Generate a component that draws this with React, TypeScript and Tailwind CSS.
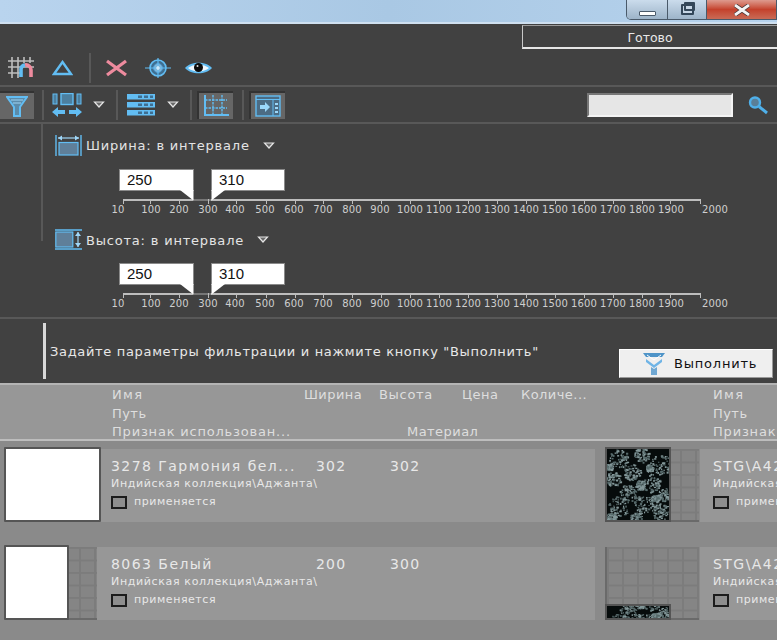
import React from 'react';

const TICKS = [
  { label: '10', x: 123, lx: 118 }, { label: '100', x: 150, lx: 151 }, { label: '200', x: 179, lx: 179 },
  { label: '300', x: 208, lx: 208 }, { label: '400', x: 236, lx: 235 }, { label: '500', x: 266, lx: 265 },
  { label: '600', x: 295, lx: 294 }, { label: '700', x: 323, lx: 323 }, { label: '800', x: 352, lx: 352 },
  { label: '900', x: 381, lx: 380 }, { label: '1000', x: 410, lx: 410 }, { label: '1100', x: 439, lx: 439 },
  { label: '1200', x: 468, lx: 468 }, { label: '1300', x: 497, lx: 497 }, { label: '1400', x: 526, lx: 526 },
  { label: '1500', x: 555, lx: 555 }, { label: '1600', x: 584, lx: 584 }, { label: '1700', x: 613, lx: 613 },
  { label: '1800', x: 642, lx: 642 }, { label: '1900', x: 670, lx: 671 }, { label: '2000', x: 700, lx: 715 },
];

const gridBg =
  'bg-[#858585] bg-[linear-gradient(#7c7c7c_2px,transparent_2px),linear-gradient(90deg,#7c7c7c_2px,transparent_2px)] bg-[length:15px_12.5px]';

// flower texture of the tile thumbnails
const Floral: React.FC<{ className?: string; viewBox?: string }> = ({ className, viewBox = '0 0 65 75' }) => {
  let seed = 17;
  const rnd = () => {
    seed = (seed * 16807) % 2147483647;
    return seed / 2147483647;
  };
  const flowers = [
    [12, 10, 10], [36, 6, 8], [56, 16, 11], [26, 24, 9], [6, 32, 8], [46, 36, 10], [22, 46, 9],
    [60, 48, 7], [12, 60, 11], [38, 58, 10], [56, 66, 9], [30, 72, 6], [4, 72, 5], [34, 38, 5],
    [44, 20, 4], [2, 18, 4], [50, 52, 4],
  ];
  const petals: React.ReactNode[] = [];
  flowers.forEach(([cx, cy, r], i) => {
    for (let k = 0; k < 70; k++) {
      const a = rnd() * Math.PI * 2;
      const d = Math.sqrt(rnd()) * r;
      petals.push(
        <rect
          key={`${i}-${k}`}
          x={cx + Math.cos(a) * d}
          y={cy + Math.sin(a) * d}
          width={1 + rnd() * 1.6}
          height={1 + rnd() * 1.2}
          fill={rnd() > 0.5 ? '#84989a' : '#56696a'}
        />
      );
    }
  });
  return (
    <svg viewBox={viewBox} preserveAspectRatio="none" className={className}>
      <rect x="0" y="0" width="65" height="75" fill="#070c0c" />
      {petals}
    </svg>
  );
};

const Caret = ({ className = '' }: { className?: string }) => (
  <svg width="12" height="7" viewBox="0 0 12 7" className={className}>
    <path d="M1.5 1h9L6 6z" fill="#6a6a6a" stroke="#e4e4e4" strokeWidth="1.2" />
  </svg>
);

const Divider = ({ className = '' }: { className?: string }) => <div className={`w-[2px] bg-[#585858] ${className}`} />;

const MeshIcon = () => (
  <svg width="28" height="22" viewBox="0 0 28 22" className="ml-[8px]">
    <path d="M0 4h26M0 10h26M0 16h14M4 0v21M10 0v21M16 0v6M22 0v6" stroke="#bdbdbd" strokeWidth="1.6" />
    <path d="M13 20v-8a4.5 4.5 0 0 1 4-4" fill="none" stroke="#62bdf3" strokeWidth="3.6" />
    <path d="M17 8a5 5 0 0 1 6 5v7" fill="none" stroke="#ee8b9e" strokeWidth="3.6" />
  </svg>
);

const TriangleIcon = () => (
  <svg width="21" height="16" viewBox="0 0 21 16" className="ml-[16px]">
    <path d="M10.5 2 19 14H2z" fill="none" stroke="#62bdf3" strokeWidth="2.4" />
  </svg>
);

const CrossIcon = () => (
  <svg width="23" height="18" viewBox="0 0 23 18" className="ml-[14px]">
    <path d="M2 2l19 14M21 2 2 16" stroke="#ee8b9e" strokeWidth="3.2" />
  </svg>
);

const TargetIcon = () => (
  <svg width="26" height="20" viewBox="0 0 26 20" className="ml-[17px]">
    <circle cx="13" cy="10" r="8" fill="#3f6e90" stroke="#62bdf3" strokeWidth="1.6" />
    <circle cx="13" cy="10" r="4.5" fill="#7fb6da" stroke="#4e9bd0" />
    <path d="M0 10h26M13 0v20" stroke="#62bdf3" strokeWidth="1.2" />
    <path d="M11 10h4M13 8v4" stroke="#e6f3fb" strokeWidth="1.2" />
  </svg>
);

const EyeIcon = () => (
  <svg width="27" height="14" viewBox="0 0 27 14" className="ml-[14px]">
    <path d="M0 7C6 0 21 0 27 7 21 14 6 14 0 7z" fill="#62bdf3" />
    <path d="M3 7c5-4.5 16-4.5 21 0-5 4.5-16 4.5-21 0z" fill="#f2f8fc" />
    <circle cx="13.5" cy="6.5" r="4.5" fill="#0c0c0c" />
    <circle cx="12.5" cy="5" r="1" fill="#ddd" />
  </svg>
);

const FilterIcon = () => (
  <svg width="22" height="22" viewBox="0 0 22 22">
    <path d="M1 2h20l-7 10v9H8v-9z" fill="#5b8cab" stroke="#62bdf3" strokeWidth="2" />
    <path d="M5 5h12M7 8h8" stroke="#9fd6f7" strokeWidth="1" />
  </svg>
);

const RunIcon = () => (
  <svg width="24" height="24" viewBox="0 0 24 24">
    <path d="M1 1h22l-3 4H4z" fill="#4f94c8" />
    <path d="M4 7l8 6 8-6v3l-8 6-8-6z" fill="#6fb4e6" />
    <path d="M5 3l7 5 7-5" fill="none" stroke="#fff" strokeWidth="1" />
    <path d="M9 15l3 2 3-2v8H9z" fill="#6fa7d2" />
  </svg>
);

const ArrowsIcon = () => (
  <svg width="30" height="24" viewBox="0 0 30 24" className="ml-[8px]">
    <rect x="1" y="1" width="4" height="10" fill="#4c7f9f" stroke="#62bdf3" />
    <rect x="9" y="0.5" width="12" height="11" fill="#4c7f9f" stroke="#62bdf3" strokeWidth="1.4" />
    <rect x="25" y="1" width="4" height="10" fill="#4c7f9f" stroke="#62bdf3" />
    <path d="M0 19l6-5v3h7v4H6v3zM30 19l-6-5v3h-7v4h7v3z" fill="#62bdf3" />
  </svg>
);

const RowsIcon = () => (
  <svg width="28" height="22" viewBox="0 0 28 22" className="ml-[9px]">
    {[0, 8, 16].map((y) => (
      <g key={y}>
        <rect x="0" y={y} width="28" height="5.5" fill="#62bdf3" />
        <rect x="11" y={y + 1.5} width="4" height="2.5" fill="#3f6e90" />
        <rect x="17" y={y + 1.5} width="4" height="2.5" fill="#3f6e90" />
        <rect x="23" y={y + 1.5} width="3" height="2.5" fill="#3f6e90" />
      </g>
    ))}
  </svg>
);

const GridBtnIcon = () => (
  <svg width="26" height="22" viewBox="0 0 26 22">
    <path d="M2 0v20h24" fill="none" stroke="#62bdf3" strokeWidth="2" />
    <path d="M2 5h22M2 13h22M10 0v20M19 0v20" fill="none" stroke="#62bdf3" strokeWidth="1.4" strokeDasharray="2.5 1" />
  </svg>
);

const PanelBtnIcon = () => (
  <svg width="26" height="22" viewBox="0 0 26 22">
    <rect x="1" y="1" width="24" height="20" fill="#4c6c84" stroke="#62bdf3" strokeWidth="1.4" />
    <path d="M1 4.5h24M18 5v16" stroke="#62bdf3" strokeWidth="1" />
    <path d="M5 10h5V7l5 5-5 5v-3H5z" fill="#9bd8fb" />
    <rect x="20" y="8" width="3" height="2" fill="#9bd8fb" />
    <rect x="20" y="12" width="3" height="2" fill="#9bd8fb" />
    <rect x="20" y="16" width="3" height="2" fill="#9bd8fb" />
  </svg>
);

const WidthIcon = () => (
  <svg width="27" height="21" viewBox="0 0 27 21" className="shrink-0">
    <path d="M1 0v21M26 0v21" stroke="#62bdf3" strokeWidth="1.4" />
    <path d="M3 3h21" stroke="#9fd6f7" strokeWidth="1.2" />
    <path d="M3 3l4-2.5v5zM24 3l-4-2.5v5z" fill="#9fd6f7" />
    <rect x="4" y="7.5" width="19" height="12.5" fill="#5f7f99" stroke="#62bdf3" strokeWidth="1.2" />
  </svg>
);

const HeightIcon = () => (
  <svg width="27" height="21" viewBox="0 0 27 21" className="shrink-0">
    <path d="M0 1h27M0 20h27" stroke="#62bdf3" strokeWidth="1.4" />
    <rect x="0.8" y="3" width="17" height="15" fill="#5f7f99" stroke="#62bdf3" strokeWidth="1.2" />
    <path d="M23 3v15" stroke="#9fd6f7" strokeWidth="1.2" />
    <path d="M23 3l-3 4h6zM23 18l-3-4h6z" fill="#9fd6f7" />
  </svg>
);

const RangeSlider = () => (
  <div className="relative h-[54px] font-['DejaVu_Sans',sans-serif]">
    <div className="absolute left-[123px] right-[77px] top-[30px] h-[2px] bg-[#bdbdbd]" />
    <div className="absolute left-[193px] w-[18px] top-[30px] h-[2px] bg-[#777]" />
    {TICKS.map((t) => (
      <React.Fragment key={t.label}>
        <div className="absolute top-[30px] w-[1px] h-[5px] bg-[#bdbdbd]" style={{ left: t.x }} />
        <span
          className="absolute top-[35px] -translate-x-1/2 text-[10px] leading-[12px] tracking-[0.15px] text-[#cfcfcf]"
          style={{ left: t.lx }}
        >
          {t.label}
        </span>
      </React.Fragment>
    ))}
    <div className="absolute left-[119px] top-0 w-[75px] h-[22px] bg-white border border-[#8a8a8a] pl-[7px] font-['Liberation_Sans',sans-serif] text-[15px] leading-[20px] text-[#111]">
      250
    </div>
    <svg width="14" height="11" viewBox="0 0 14 11" className="absolute left-[180px] top-[21px]">
      <path d="M0 0h13.5v10.5z" fill="#fff" />
    </svg>
    <div className="absolute left-[211px] top-0 w-[74px] h-[22px] bg-white border border-[#8a8a8a] pl-[7px] font-['Liberation_Sans',sans-serif] text-[15px] leading-[20px] text-[#111]">
      310
    </div>
    <svg width="14" height="11" viewBox="0 0 14 11" className="absolute left-[211px] top-[21px]">
      <path d="M0.5 0H14L0.5 10.5z" fill="#fff" />
    </svg>
  </div>
);

const HeaderCell = () => (
  <div className="w-[601px] shrink-0 pl-[112px] text-[13px] text-[#dedede] leading-[16px] tracking-[0.45px]">
    <div className="flex h-[20px] pt-[2px]">
      <span className="w-[192px] tracking-[1.4px]">Имя</span>
      <span className="w-[75px]">Ширина</span>
      <span className="w-[83px] tracking-[0.7px]">Высота</span>
      <span className="w-[59px]">Цена</span>
      <span>Количе...</span>
    </div>
    <div className="h-[19px] pt-[1px]">Путь</div>
    <div className="flex h-[17px]">
      <span className="w-[295px] tracking-[0.8px] whitespace-nowrap">Признак использован...</span>
      <span>Материал</span>
    </div>
  </div>
);

type TileProps = { name: string; w: string; h: string; thumb: React.ReactNode; panelLeft: number };

const Tile = ({ name, w, h, thumb, panelLeft }: TileProps) => (
  <div className="w-[601px] shrink-0 h-[75px] flex pl-[4px]">
    <div className="relative shrink-0 h-[75px]" style={{ width: panelLeft }}>
      {thumb}
    </div>
    <div className="w-[498px] shrink-0 mt-[2px] h-[73px] bg-[#979797] text-[#e8e8e8] pl-[14px]" style={{ marginLeft: 93 - panelLeft }}>
      <div className="flex pt-[9px] text-[14px] leading-[16px] tracking-[1.45px]">
        <span className="w-[205px] whitespace-nowrap overflow-hidden">{name}</span>
        <span className="w-[74px] tracking-[1.2px]">{w}</span>
        <span className="tracking-[1.2px]">{h}</span>
      </div>
      <div className="mt-[3px] text-[11px] leading-[14px] tracking-[0.65px] whitespace-nowrap">
        Индийская коллекция\Аджанта\
      </div>
      <div className="mt-[4px] flex items-center text-[11px] leading-[14px] tracking-[0.55px] whitespace-nowrap">
        <span className="w-[16px] h-[13px] border-2 border-[#1c1c1c] bg-[#8e8e8e] mr-[7px]" />
        применяется
      </div>
    </div>
  </div>
);

const WhiteThumb = ({ width }: { width: string }) => (
  <div className={`absolute left-0 top-0 h-[75px] bg-white border-2 border-[#555] rounded-[1px] ${width}`} />
);

const GridBack = ({ from }: { from: string }) => (
  <div className={`absolute top-[2px] h-[73px] ${from} ${gridBg} border-b-2 border-[#6a6a6a]`} />
);

const RightThumb1 = () => (
  <div className="relative w-[94px] h-[75px] shrink-0">
    <div className={`absolute left-[60px] right-0 top-[2px] h-[73px] ${gridBg} border-b-2 border-[#6a6a6a]`} />
    <div className="absolute left-0 top-0 w-[66px] h-[75px] border-2 border-[#555] overflow-hidden">
      <Floral className="w-full h-full block" />
    </div>
  </div>
);

const RightThumb2 = () => (
  <div className="relative w-[94px] h-[75px] shrink-0">
    <div className={`absolute left-0 right-0 top-[2px] h-[73px] ${gridBg} border-b-2 border-l-2 border-[#6a6a6a]`} />
    <div className="absolute left-0 bottom-0 w-[66px] h-[16px] border-2 border-[#555] overflow-hidden">
      <Floral className="w-full h-full block" viewBox="0 40 65 15" />
    </div>
  </div>
);

const RightTile = ({ thumb }: { thumb: React.ReactNode }) => (
  <div className="w-[176px] shrink-0 h-[75px] flex pl-[4px]">
    {thumb}
    <div className="ml-[1px] flex-1 mt-[2px] h-[73px] bg-[#979797] text-[#e8e8e8] pl-[13px] overflow-hidden whitespace-nowrap">
      <div className="pt-[9px] text-[14px] leading-[16px] tracking-[1.45px]">STG\A42</div>
      <div className="mt-[3px] text-[11px] leading-[14px] tracking-[0.65px]">Индийская коллекция</div>
      <div className="mt-[4px] flex items-center text-[11px] leading-[14px] tracking-[0.55px]">
        <span className="w-[16px] h-[13px] border-2 border-[#1c1c1c] bg-[#8e8e8e] mr-[7px] shrink-0" />
        применяется
      </div>
    </div>
  </div>
);

export default function App() {
  return (
    <div className="w-[777px] h-[640px] overflow-hidden bg-[#414141] font-['DejaVu_Sans',sans-serif]">
      {/* title bar */}
      <div className="h-[24px] flex justify-end items-start bg-gradient-to-r from-[#b9d4ee] via-[#a9c8e4] to-[#b7d3ed] border-b-2 border-[#cfe0f0]">
        <div className="w-[151px] h-[20px] flex border border-t-0 border-[#4a5a6a] rounded-bl-[5px] overflow-hidden">
          <div className="w-[41px] flex items-end justify-center pb-[3px] bg-gradient-to-b from-[#cbdcec] to-[#9db4c9] border-r border-[#4a5a6a]">
            <div className="w-[17px] h-[5px] bg-white border border-[#4a5a6a] rounded-[1px]" />
          </div>
          <div className="w-[39px] flex items-center justify-center bg-gradient-to-b from-[#cbdcec] to-[#9db4c9] border-r border-[#4a5a6a]">
            <div className="relative w-[13px] h-[11px] border-2 border-[#33475a] rounded-[1px] bg-[#c6d6e6]">
              <div className="absolute -top-[4px] left-[1px] w-[11px] h-[9px] border-2 border-[#33475a] rounded-[1px]" />
            </div>
          </div>
          <div className="flex-1 flex items-center justify-center bg-gradient-to-b from-[#dd9a8e] via-[#c4412c] to-[#c96a55]">
            <svg width="18" height="12" viewBox="0 0 18 12">
              <path d="M2 1l14 10M16 1 2 11" stroke="#4a3a3a" strokeWidth="4.4" />
              <path d="M2 1l14 10M16 1 2 11" stroke="#f4f4f4" strokeWidth="2.8" />
            </svg>
          </div>
        </div>
      </div>

      {/* top toolbar */}
      <div className="h-[63px] border-b-2 border-[#585858] relative">
        <div className="flex justify-end pt-[1px]">
          <div className="w-[255px] h-[24px] border-l border-t border-b-2 border-l-[#c8c8c8] border-t-[#9a9a9a] border-b-[#e6e6e6] text-center text-[12.5px] leading-[24px] text-[#e8e8e8]">
            Готово
          </div>
        </div>
        <div className="flex items-center h-[36px] pt-[2px]">
          <MeshIcon />
          <TriangleIcon />
          <Divider className="ml-[16px] h-[30px]" />
          <CrossIcon />
          <TargetIcon />
          <EyeIcon />
        </div>
      </div>

      {/* second toolbar */}
      <div className="h-[37px] border-b-2 border-[#585858] flex items-center">
        <div className="w-[34px] h-[28px] bg-[#666] border-t-2 border-[#333] flex items-center justify-center">
          <FilterIcon />
        </div>
        <Divider className="ml-[8px] h-[30px]" />
        <ArrowsIcon />
        <Caret className="ml-[11px]" />
        <Divider className="ml-[11px] h-[30px]" />
        <RowsIcon />
        <Caret className="ml-[12px]" />
        <Divider className="ml-[11px] h-[30px]" />
        <div className="ml-[5px] w-[36px] h-[28px] bg-[#666] border-t-2 border-l-2 border-[#333] flex items-center justify-center">
          <GridBtnIcon />
        </div>
        <Divider className="ml-[9px] h-[30px]" />
        <div className="ml-[5px] w-[36px] h-[28px] bg-[#666] border-t-2 border-l-2 border-[#333] flex items-center justify-center">
          <PanelBtnIcon />
        </div>
        <div className="ml-[302px] w-[146px] h-[24px] bg-[#e6e6e6] border-2 border-t-[#777] border-l-[#777] border-b-[#f4f4f4] border-r-[#f4f4f4]" />
        <svg width="22" height="20" viewBox="0 0 22 20" className="ml-[14px]">
          <circle cx="8" cy="7.5" r="5" fill="#5a7f98" stroke="#4fb0ea" strokeWidth="2.4" />
          <path d="M12 11.5l8 6.5" stroke="#4fb0ea" strokeWidth="3" />
        </svg>
      </div>

      {/* filter sliders */}
      <div className="relative h-[195px] pt-[11px] border-b-2 border-[#585858]">
        <div className="absolute left-[41px] top-0 w-[2px] h-[117px] bg-[#585858]" />
        <div className="flex items-center h-[21px] ml-[55px] text-[13px] text-[#e4e4e4]">
          <WidthIcon />
          <span className="ml-[4px] pt-[1px] whitespace-nowrap tracking-[0.8px]">Ширина: в интервале</span>
          <Caret className="ml-[13px]" />
        </div>
        <div className="mt-[13px]">
          <RangeSlider />
        </div>
        <div className="flex items-center h-[21px] mt-[6px] ml-[55px] text-[13px] text-[#e4e4e4]">
          <HeightIcon />
          <span className="ml-[4px] pt-[2px] whitespace-nowrap tracking-[0.8px]">Высота: в интервале</span>
          <Caret className="ml-[13px]" />
        </div>
        <div className="mt-[13px]">
          <RangeSlider />
        </div>
      </div>

      {/* hint and run button */}
      <div className="h-[64px] flex pl-[43px] pt-[4px] relative">
        <div className="w-[3px] h-[56px] bg-[#d8d8d8]" />
        <span className="ml-[4px] mt-[21px] text-[13px] leading-[16px] text-[#e8e8e8] tracking-[0.67px] whitespace-nowrap">
          Задайте параметры фильтрации и нажмите кнопку "Выполнить"
        </span>
        <button className="absolute right-[4px] top-[30px] w-[154px] h-[29px] bg-[#efefef] border border-[#fff] border-b-[#999] border-r-[#999] flex items-center text-[13px] tracking-[0.8px] text-[#111]">
          <span className="ml-[22px] mr-[8px] flex">
            <RunIcon />
          </span>
          Выполнить
        </button>
      </div>

      {/* tile list */}
      <div className="h-[257px] bg-[#8a8a8a] overflow-hidden">
        <div className="h-[58px] bg-[#979797] border-t-2 border-b-2 border-t-[#b4b4b4] border-b-[#bdbdbd] flex overflow-hidden">
          <HeaderCell />
          <div className="w-[176px] shrink-0 overflow-hidden">
            <div className="w-[601px] pl-[112px] text-[13px] text-[#dedede] leading-[16px] tracking-[0.45px]">
              <div className="h-[20px] pt-[2px] tracking-[1.4px]">Имя</div>
              <div className="h-[19px] pt-[1px]">Путь</div>
              <div className="h-[17px] tracking-[0.8px] whitespace-nowrap">Признак использован...</div>
            </div>
          </div>
        </div>
        <div className="flex mt-[6px]">
          <Tile name="3278 Гармония бел..." w="302" h="302" panelLeft={97} thumb={<WhiteThumb width="w-[97px]" />} />
          <RightTile thumb={<RightThumb1 />} />
        </div>
        <div className="flex mt-[23px]">
          <Tile
            name="8063 Белый"
            w="200"
            h="300"
            panelLeft={93}
            thumb={
              <>
                <GridBack from="left-[60px] right-0" />
                <WhiteThumb width="w-[65px]" />
              </>
            }
          />
          <RightTile thumb={<RightThumb2 />} />
        </div>
      </div>
    </div>
  );
}
